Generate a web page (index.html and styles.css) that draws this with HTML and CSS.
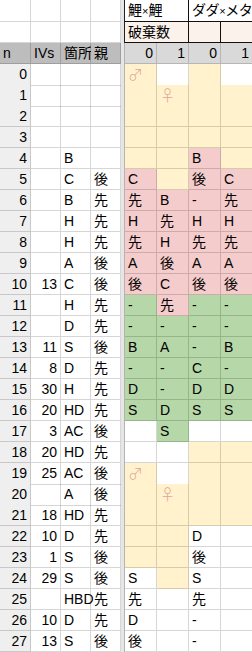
FILE: index.html
```html
<!DOCTYPE html>
<html lang="ja">
<head>
<meta charset="utf-8">
<title>sheet</title>
<link rel="stylesheet" href="styles.css">
</head>
<body>
<div class="sheet">
  <div class="row first">
    <div class="c"></div><div class="c"></div><div class="c"></div><div class="c"></div><div class="strip dark"></div>
    <div class="c span2 bb br">鯉<span class="x">×</span>鯉</div><div class="c span2 bb tight">ダダ<span class="x">×</span>メタ</div>
  </div>
  <div class="row">
    <div class="c"></div><div class="c"></div><div class="c"></div><div class="c"></div><div class="strip dark"></div>
    <div class="c span2 peach bb br">破棄数</div><div class="c peach bb br"></div><div class="c peach bb br"></div>
  </div>
  <div class="row">
    <div class="c hd">n</div><div class="c hd">IVs</div><div class="c hd">箇所</div><div class="c hd">親</div><div class="strip"></div>
    <div class="c hd2 r">0</div><div class="c hd2 r">1</div><div class="c hd2 r">0</div><div class="c hd2 r">1</div>
  </div>

  <div class="row"><div class="c n">0</div><div class="c r"></div><div class="c"></div><div class="c"></div><div class="strip"></div><div class="c y"><span class="sym">♂</span></div><div class="c"></div><div class="c y"></div><div class="c"></div></div>
  <div class="row"><div class="c n">1</div><div class="c r"></div><div class="c"></div><div class="c"></div><div class="strip"></div><div class="c y"></div><div class="c y"><span class="sym">♀</span></div><div class="c y"></div><div class="c y"></div></div>
  <div class="row"><div class="c n">2</div><div class="c r"></div><div class="c"></div><div class="c"></div><div class="strip"></div><div class="c y"></div><div class="c y"></div><div class="c y"></div><div class="c y"></div></div>
  <div class="row"><div class="c n">3</div><div class="c r"></div><div class="c"></div><div class="c"></div><div class="strip"></div><div class="c y"></div><div class="c y"></div><div class="c y"></div><div class="c y"></div></div>
  <div class="row"><div class="c n">4</div><div class="c r"></div><div class="c">B</div><div class="c"></div><div class="strip"></div><div class="c y"></div><div class="c y"></div><div class="c p">B</div><div class="c y"></div></div>
  <div class="row"><div class="c n">5</div><div class="c r"></div><div class="c">C</div><div class="c">後</div><div class="strip"></div><div class="c p">C</div><div class="c y"></div><div class="c p">後</div><div class="c p">C</div></div>
  <div class="row"><div class="c n">6</div><div class="c r"></div><div class="c">B</div><div class="c">先</div><div class="strip"></div><div class="c p">先</div><div class="c p">B</div><div class="c p">-</div><div class="c p">先</div></div>
  <div class="row"><div class="c n">7</div><div class="c r"></div><div class="c">H</div><div class="c">先</div><div class="strip"></div><div class="c p">H</div><div class="c p">先</div><div class="c p">H</div><div class="c p">H</div></div>
  <div class="row"><div class="c n">8</div><div class="c r"></div><div class="c">H</div><div class="c">先</div><div class="strip"></div><div class="c p">先</div><div class="c p">H</div><div class="c p">先</div><div class="c p">先</div></div>
  <div class="row"><div class="c n">9</div><div class="c r"></div><div class="c">A</div><div class="c">後</div><div class="strip"></div><div class="c p">A</div><div class="c p">後</div><div class="c p">A</div><div class="c p">A</div></div>
  <div class="row"><div class="c n">10</div><div class="c r">13</div><div class="c">C</div><div class="c">後</div><div class="strip"></div><div class="c p">後</div><div class="c p">C</div><div class="c p">後</div><div class="c p">後</div></div>
  <div class="row"><div class="c n">11</div><div class="c r"></div><div class="c">H</div><div class="c">先</div><div class="strip"></div><div class="c g">-</div><div class="c p">先</div><div class="c g">-</div><div class="c g">-</div></div>
  <div class="row"><div class="c n">12</div><div class="c r"></div><div class="c">D</div><div class="c">先</div><div class="strip"></div><div class="c g">-</div><div class="c g">-</div><div class="c g">-</div><div class="c g">-</div></div>
  <div class="row"><div class="c n">13</div><div class="c r">11</div><div class="c">S</div><div class="c">後</div><div class="strip"></div><div class="c g">B</div><div class="c g">A</div><div class="c g">-</div><div class="c g">B</div></div>
  <div class="row"><div class="c n">14</div><div class="c r">8</div><div class="c">D</div><div class="c">先</div><div class="strip"></div><div class="c g">-</div><div class="c g">-</div><div class="c g">C</div><div class="c g">-</div></div>
  <div class="row"><div class="c n">15</div><div class="c r">30</div><div class="c">H</div><div class="c">先</div><div class="strip"></div><div class="c g">D</div><div class="c g">-</div><div class="c g">D</div><div class="c g">D</div></div>
  <div class="row"><div class="c n">16</div><div class="c r">20</div><div class="c">HD</div><div class="c">先</div><div class="strip"></div><div class="c g">S</div><div class="c g">D</div><div class="c g">S</div><div class="c g">S</div></div>
  <div class="row"><div class="c n">17</div><div class="c r">3</div><div class="c">AC</div><div class="c">後</div><div class="strip"></div><div class="c"></div><div class="c g">S</div><div class="c"></div><div class="c"></div></div>
  <div class="row"><div class="c n">18</div><div class="c r">20</div><div class="c">HD</div><div class="c">先</div><div class="strip"></div><div class="c"></div><div class="c"></div><div class="c y"></div><div class="c y"></div></div>
  <div class="row"><div class="c n">19</div><div class="c r">25</div><div class="c">AC</div><div class="c">後</div><div class="strip"></div><div class="c y"><span class="sym">♂</span></div><div class="c"></div><div class="c y"></div><div class="c y"></div></div>
  <div class="row"><div class="c n">20</div><div class="c r"></div><div class="c">A</div><div class="c">後</div><div class="strip"></div><div class="c y"></div><div class="c y"><span class="sym">♀</span></div><div class="c y"></div><div class="c y"></div></div>
  <div class="row"><div class="c n">21</div><div class="c r">18</div><div class="c">HD</div><div class="c">先</div><div class="strip"></div><div class="c y"></div><div class="c y"></div><div class="c y"></div><div class="c y"></div></div>
  <div class="row"><div class="c n">22</div><div class="c r">10</div><div class="c">D</div><div class="c">先</div><div class="strip"></div><div class="c y"></div><div class="c y"></div><div class="c">D</div><div class="c"></div></div>
  <div class="row"><div class="c n">23</div><div class="c r">1</div><div class="c">S</div><div class="c">後</div><div class="strip"></div><div class="c y"></div><div class="c y"></div><div class="c">後</div><div class="c"></div></div>
  <div class="row"><div class="c n">24</div><div class="c r">29</div><div class="c">S</div><div class="c">後</div><div class="strip"></div><div class="c">S</div><div class="c y"></div><div class="c">S</div><div class="c"></div></div>
  <div class="row"><div class="c n">25</div><div class="c r"></div><div class="c">HBD</div><div class="c">先</div><div class="strip"></div><div class="c">先</div><div class="c"></div><div class="c">先</div><div class="c"></div></div>
  <div class="row"><div class="c n">26</div><div class="c r">10</div><div class="c">D</div><div class="c">先</div><div class="strip"></div><div class="c">D</div><div class="c"></div><div class="c">-</div><div class="c"></div></div>
  <div class="row"><div class="c n">27</div><div class="c r">13</div><div class="c">S</div><div class="c">後</div><div class="strip"></div><div class="c">後</div><div class="c"></div><div class="c">-</div><div class="c"></div></div>
</div>
</body>
</html>
```

FILE: styles.css
```css
html, body {
  margin: 0;
  padding: 0;
  background: #ffffff;
}

.sheet {
  width: 252px;
  height: 652px;
  overflow: hidden;
  font-family: "Liberation Sans", "Noto Sans CJK JP", sans-serif;
  font-size: 14px;
  color: #000;
}

.row {
  display: grid;
  grid-template-columns: 31px 30px 30px 30px 4px 32px 32px 32px 32px;
  height: 21px;
}

.row.first {
  height: 22px;
}

.c {
  box-sizing: border-box;
  border-right: 1px solid rgba(0, 0, 0, 0.16);
  border-bottom: 1px solid rgba(0, 0, 0, 0.16);
  padding: 0 3px;
  line-height: 20px;
  white-space: nowrap;
}

.span2 {
  grid-column: span 2;
}

.x {
  font-family: "Liberation Sans", sans-serif;
  font-size: 11px;
}

.tight {
  padding-left: 3px;
  padding-right: 0;
  letter-spacing: -0.4px;
}

.r {
  text-align: right;
}

.n {
  text-align: right;
  background: #efefef;
}

.hd {
  background: #bdbdbd;
}

.hd2 {
  background: #d9d9d9;
}

.strip {
  box-sizing: border-box;
  background: #e6e6e6;
  border-right: 1px solid #b4b4b4;
}

.strip.dark {
  border-right-color: #222;
}

.bb {
  border-bottom-color: #111;
}

.br {
  border-right-color: #111;
}

.peach {
  background: #fcf2ec;
}

.y {
  background: #fff2cc;
}

.p {
  background: #f4cccc;
}

.g {
  background: #b6d7a8;
}

.sym {
  font-family: "Noto Sans CJK JP", sans-serif;
  font-weight: 300;
  font-size: 15px;
  color: #dea59c;
}
```
